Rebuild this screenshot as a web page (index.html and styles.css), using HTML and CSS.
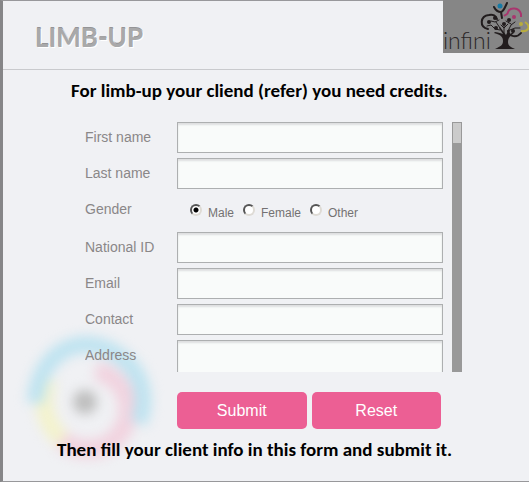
FILE: index.html
```html
<!DOCTYPE html>
<html lang="en">
<head>
    <meta charset="UTF-8">
    <meta content="width=device-width, initial-scale=1.0" name="viewport">
    <title>Limb-Up</title>
    <link rel="stylesheet" href="styles.css">
</head>
<body>
<main class="dialog">
    <header class="header">
        <h1 class="title">LIMB-UP</h1>
        <svg class="logo" viewBox="0 0 86 53" role="img" aria-label="infini">
            <rect width="86" height="53" fill="#868686"/>
            <text x="0" y="49" class="logo-text">infini</text>
            <!-- trunk and branches -->
            <path fill="#211c1d" d="M52 49 C58 46 60 45 60 41 C60 37 58 35 51 33 L52 32 C56 33 58 33 60 34 L56 28 L57 27 L63 35 L66 29 L67 30 L66 35 L70 32 L71 33 C67 36 65 38 65 42 C65 46 68 47 72 49 Z"/>
            <g fill="none" stroke="#211c1d" stroke-linecap="round">
                <path stroke-width="2" d="M45 29 C36 27 37 16 46 15 C50 14 53 16 54 19"/>
                <path stroke-width="2" d="M65 31 C66 37 74 38 78 33"/>
                <path stroke-width="1" d="M44 26 L48 25 L52 29 L57 30 M48 21 L52 22 L56 20 M53 22 L57 28 M61 35 L61 26 M58 25 L61 28 L65 24 M65 31 L68 25 L72 22 M63 21 L68 24 M67 30 L72 28 L77 28"/>
                <path stroke-width="2" d="M51 7 C53 11 56 12 58 12 C61 11 62 7 64 3 M58 12 L59 18"/>
            </g>
            <g fill="#211c1d">
                <circle cx="46" cy="22" r="2"/>
                <circle cx="52" cy="18" r="2"/>
                <circle cx="66" cy="20" r="2"/>
                <circle cx="61" cy="24" r="2"/>
                <circle cx="53" cy="28" r="2"/>
                <circle cx="70" cy="31" r="2"/>
            </g>
            <circle cx="57" cy="6" r="2.5" fill="#167aa5"/>
            <path d="M61 16 C63 14 65 15 65 12 C67 7 76 7 78 14 L78 17" fill="none" stroke="#a9366e" stroke-width="2"/>
            <circle cx="71" cy="17" r="2" fill="#a9366e"/>
            <path d="M82 22 C88 26 86 32 78 31" fill="none" stroke="#b9ad3d" stroke-width="2"/>
            <circle cx="78" cy="24" r="2" fill="#b9ad3d"/>
        </svg>
    </header>

    <p class="note">For limb-up your cliend (refer) you need credits.</p>

    <form class="client-form">
        <svg class="swirl" viewBox="0 0 160 160" aria-hidden="true">
            <g fill="none">
                <path d="M43 58 C34 85 42 108 62 122" stroke="#f3f2cd" stroke-width="18"/>
                <path d="M91 50 C122 56 134 92 112 116 C98 131 72 132 57 119" stroke="#f1d3df" stroke-width="19"/>
                <path d="M30 82 C34 26 82 8 118 38 C140 56 142 84 133 102" stroke="#bfe3f0" stroke-width="17"/>
            </g>
            <circle cx="80" cy="81" r="12" fill="#bdbdbd"/>
        </svg>

        <div class="scroll-area">
            <div class="fields">
                <div class="row">
                    <label for="first-name">First name</label>
                    <input type="text" id="first-name">
                </div>
                <div class="row">
                    <label for="last-name">Last name</label>
                    <input type="text" id="last-name">
                </div>
                <div class="row gender-row" role="radiogroup" aria-labelledby="gender-label">
                    <span class="row-label" id="gender-label">Gender</span>
                    <div class="options">
                        <input type="radio" name="gender" id="male" checked>
                        <label for="male">Male</label>
                        <input type="radio" name="gender" id="female">
                        <label for="female">Female</label>
                        <input type="radio" name="gender" id="other">
                        <label for="other">Other</label>
                    </div>
                </div>
                <div class="row">
                    <label for="national-id">National ID</label>
                    <input type="text" id="national-id">
                </div>
                <div class="row">
                    <label for="email">Email</label>
                    <input type="text" id="email">
                </div>
                <div class="row">
                    <label for="contact">Contact</label>
                    <input type="text" id="contact">
                </div>
                <div class="row">
                    <label for="address">Address</label>
                    <input type="text" id="address" class="tall">
                </div>
            </div>
            <div class="scrollbar" aria-hidden="true">
                <div class="thumb"></div>
            </div>
        </div>

        <div class="buttons">
            <button type="submit">Submit</button>
            <button type="reset">Reset</button>
        </div>
    </form>

    <p class="note note-bottom">Then fill your client info in this form and submit it.</p>
</main>
</body>
</html>
```

FILE: styles.css
```css
* {
    box-sizing: border-box;
}

body {
    margin: 0;
    background: #f0f1f4;
    font-family: "Liberation Sans", Arial, sans-serif;
    color: #8a8788;
}

.dialog {
    min-height: 100vh;
    background: #f0f1f4;
    border-top: 1px solid #98989b;
    border-bottom: 1px solid #98989b;
    border-left: 3px solid #868688;
}

.header {
    position: relative;
    display: flex;
    align-items: center;
    height: 69px;
    padding: 4px 0 0 32px;
    border-bottom: 1px solid #c9cacd;
}

.title {
    margin: 0;
    font-family: Lato, sans-serif;
    font-size: 26px;
    font-weight: 700;
    line-height: 32px;
    color: #a9a9aa;
    text-shadow: 1px 1px 0 #fff, 0 -1px 0 #949496;
}

.logo {
    position: absolute;
    top: -1px;
    right: 0;
    width: 86px;
    height: 53px;
}

.logo-text {
    font-family: Lato, sans-serif;
    font-size: 23px;
    font-weight: 300;
    fill: #2b2728;
}

.note {
    margin: 0;
    padding: 9px 0 0 68px;
    font-family: Carlito, Lato, sans-serif;
    font-size: 19px;
    font-weight: 700;
    line-height: 24px;
    color: #000;
    white-space: nowrap;
}

.note-bottom {
    position: relative;
    padding-left: 54px;
}

.client-form {
    position: relative;
    padding: 19px 67px 0 82px;
}

.swirl {
    position: absolute;
    left: 2px;
    bottom: -52px;
    width: 160px;
    height: 160px;
    filter: blur(6px);
}

.scroll-area {
    position: relative;
    display: flex;
    gap: 9px;
    height: 250px;
    overflow: hidden;
}

.fields {
    flex: 1;
}

.row {
    display: flex;
    margin-bottom: 5px;
}

.row > label,
.row-label {
    width: 92px;
    font-size: 14px;
    line-height: 31px;
}

input[type="text"] {
    flex: 1;
    min-width: 0;
    height: 31px;
    padding: 0 8px;
    border: 1px solid #adafb0;
    border-radius: 0;
    background: #f9fbfa;
    box-shadow: inset 0 2px 2px #dedfe0;
    font: inherit;
    outline: none;
}

input.tall {
    height: 36px;
}

.gender-row {
    height: 33px;
}

.options {
    display: flex;
    align-items: flex-start;
    padding: 10px 0 0 13px;
    font-size: 12px;
    line-height: 18px;
    color: #747172;
}

.options label {
    margin: 0 9px 0 6px;
}

input[type="radio"] {
    appearance: none;
    width: 12px;
    height: 12px;
    margin: 0;
    border: 2px solid;
    border-color: #555 #dedbd5 #dedbd5 #555;
    border-radius: 50%;
    background: #fff;
}

input[type="radio"]:checked {
    background: radial-gradient(circle, #000 2px, #fff 3px);
}

.scrollbar {
    width: 10px;
    background: #999;
    border: 1px solid #999;
}

.thumb {
    height: 20px;
    background: #cbcbcb;
}

.buttons {
    position: relative;
    display: flex;
    gap: 5px;
    padding: 20px 21px 0 92px;
}

button {
    flex: 1;
    height: 37px;
    padding: 0;
    border: 0;
    border-radius: 5px;
    background: #ec5f94;
    color: #fff;
    font-family: inherit;
    font-size: 16px;
}
```
